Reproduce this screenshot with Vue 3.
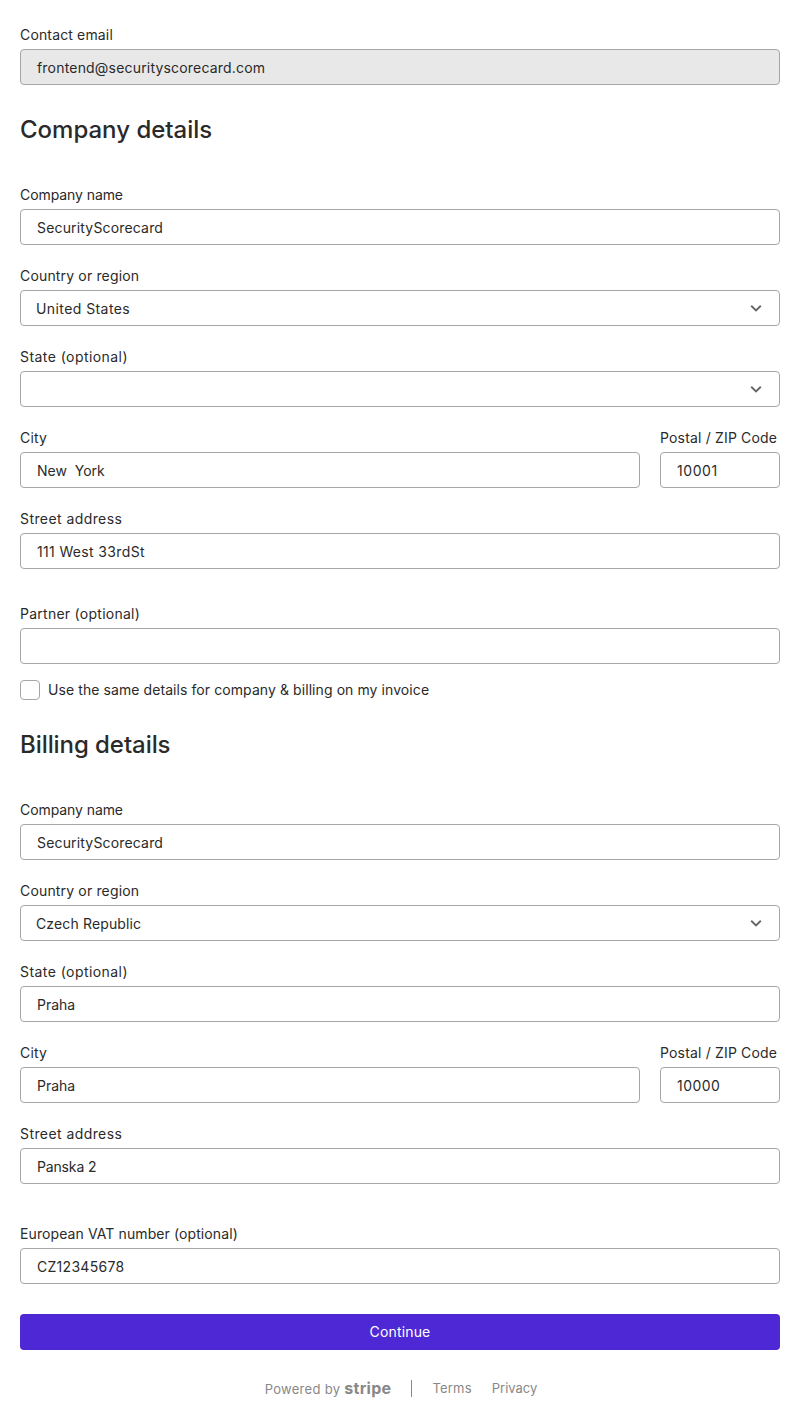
<script setup>
const tracking = {
  'Contact email': 0.15,
  'frontend@securityscorecard.com': 0.19,
  'Company name': -0.08,
  SecurityScorecard: 0.17,
  'Country or region': 0.16,
  'United States': 0.42,
  'State (optional)': 0.44,
  City: 0.2,
  'Postal / ZIP Code': 0.17,
  10001: 0.55,
  10000: 0.45,
  'Street address': 0.42,
  '111 West 33rdSt': 0.35,
  'Partner (optional)': 0.26,
  'Czech Republic': 0.14,
  'Panska 2': -0.15,
  'European VAT number (optional)': 0.1,
  CZ12345678: 0.28,
  'Billing details': -0.07,
}
const spacing = (t) => ({ letterSpacing: (tracking[t] || 0) + 'px' })

const company = [
  { label: 'Company name', value: 'SecurityScorecard' },
  { label: 'Country or region', value: 'United States', select: true },
  { label: 'State (optional)', value: '', select: true },
  { label: 'City', value: 'New  York', half: 'city' },
  { label: 'Postal / ZIP Code', value: '10001', half: 'zip' },
  { label: 'Street address', value: '111 West 33rdSt' },
  { label: 'Partner (optional)', value: '', gap: 'g14' },
]
const billing = [
  { label: 'Company name', value: 'SecurityScorecard' },
  { label: 'Country or region', value: 'Czech Republic', select: true },
  { label: 'State (optional)', value: 'Praha' },
  { label: 'City', value: 'Praha', half: 'city' },
  { label: 'Postal / ZIP Code', value: '10000', half: 'zip' },
  { label: 'Street address', value: 'Panska 2' },
  { label: 'European VAT number (optional)', value: 'CZ12345678', gap: 'g19' },
]
const contact = [{ label: 'Contact email', value: 'frontend@securityscorecard.com', disabled: true }]
const sections = [
  { title: '', fields: contact },
  { title: 'Company details', fields: company, check: true },
  { title: 'Billing details', fields: billing },
]
</script>

<template>
  <main class="page">
    <section v-for="s in sections" :key="s.title">
      <h2 v-if="s.title" :style="spacing(s.title)">{{ s.title }}</h2>
      <div class="grid">
        <div v-for="f in s.fields" :key="f.label" class="field" :class="[f.half, f.gap]">
          <label :style="spacing(f.label)">{{ f.label }}</label>
          <div class="box" :class="{ select: f.select, disabled: f.disabled }">
            <span :style="spacing(f.value)">{{ f.value }}</span>
            <svg v-if="f.select" width="12" height="8" viewBox="0 0 12 8">
              <path d="M1.2 1.7 L6 6.4 L10.8 1.7" fill="none" stroke="#666" stroke-width="1.9" />
            </svg>
          </div>
        </div>
      </div>
      <div v-if="s.check" class="check"><i></i><span>Use the same details for company &amp; billing on my invoice</span></div>
    </section>
    <button>Continue</button>
    <footer>
      <span class="powered">Powered by <b>stripe</b></span>
      <i class="bar"></i>
      <span class="terms">Terms</span>
      <span class="privacy">Privacy</span>
    </footer>
  </main>
</template>

<style>
body { background: #fff; }
</style>

<style scoped>
.page {
  box-sizing: border-box;
  height: 1417px;
  padding: 25px 20px 0;
  font-family: Inter, sans-serif;
  font-size: 14px;
  font-weight: 400;
  color: #2a2a2a;
}
.field { min-width: 0; }
label { display: block; height: 20px; line-height: 20px; margin-bottom: 4px; white-space: nowrap; }
.box {
  box-sizing: border-box;
  height: 36px;
  padding: 0 16px;
  border: 1px solid #a6a6a6;
  border-radius: 4px;
  display: flex;
  align-items: center;
  justify-content: space-between;
  line-height: 20px;
  white-space: pre;
}
.box span { padding-top: 2px; }
.select { padding: 0 17px 0 15px; }
.disabled { background: #e8e8e8; }
h2 { margin: 27px 0 37px; height: 36px; line-height: 36px; font-size: 24px; font-weight: 500; }
.grid { display: grid; grid-template-columns: 1fr 120px; column-gap: 20px; row-gap: 21px; }
.field { grid-column: 1 / -1; }
.city { grid-column: 1; }
.zip { grid-column: 2; }
.g14 { margin-top: 14px; }
.g19 { margin-top: 19px; }
.check { display: flex; align-items: center; margin-top: 16px; height: 20px; line-height: 20px; letter-spacing: 0.08px; }
.check i { box-sizing: border-box; width: 20px; height: 20px; border: 1px solid #a6a6a6; border-radius: 4px; margin-right: 8px; }
button { display: block; width: 100%; height: 36px; margin: 30px 0 0; padding: 0; border: 0; border-radius: 4px; background: #4d28d4; color: #fff; font: 400 14px/36px Inter, sans-serif; letter-spacing: 0.16px; }
footer { display: flex; justify-content: center; align-items: center; height: 20px; margin-top: 28px; padding-left: 2px; font-size: 13px; color: #888; }
.powered { letter-spacing: 0.3px; }
.bar { width: 1px; height: 17px; background: #888; margin: 0 20px; }
b { font-size: 16px; font-weight: 700; }
.terms { margin-right: 20px; letter-spacing: 0.2px; }
.privacy { letter-spacing: 0; }
</style>
